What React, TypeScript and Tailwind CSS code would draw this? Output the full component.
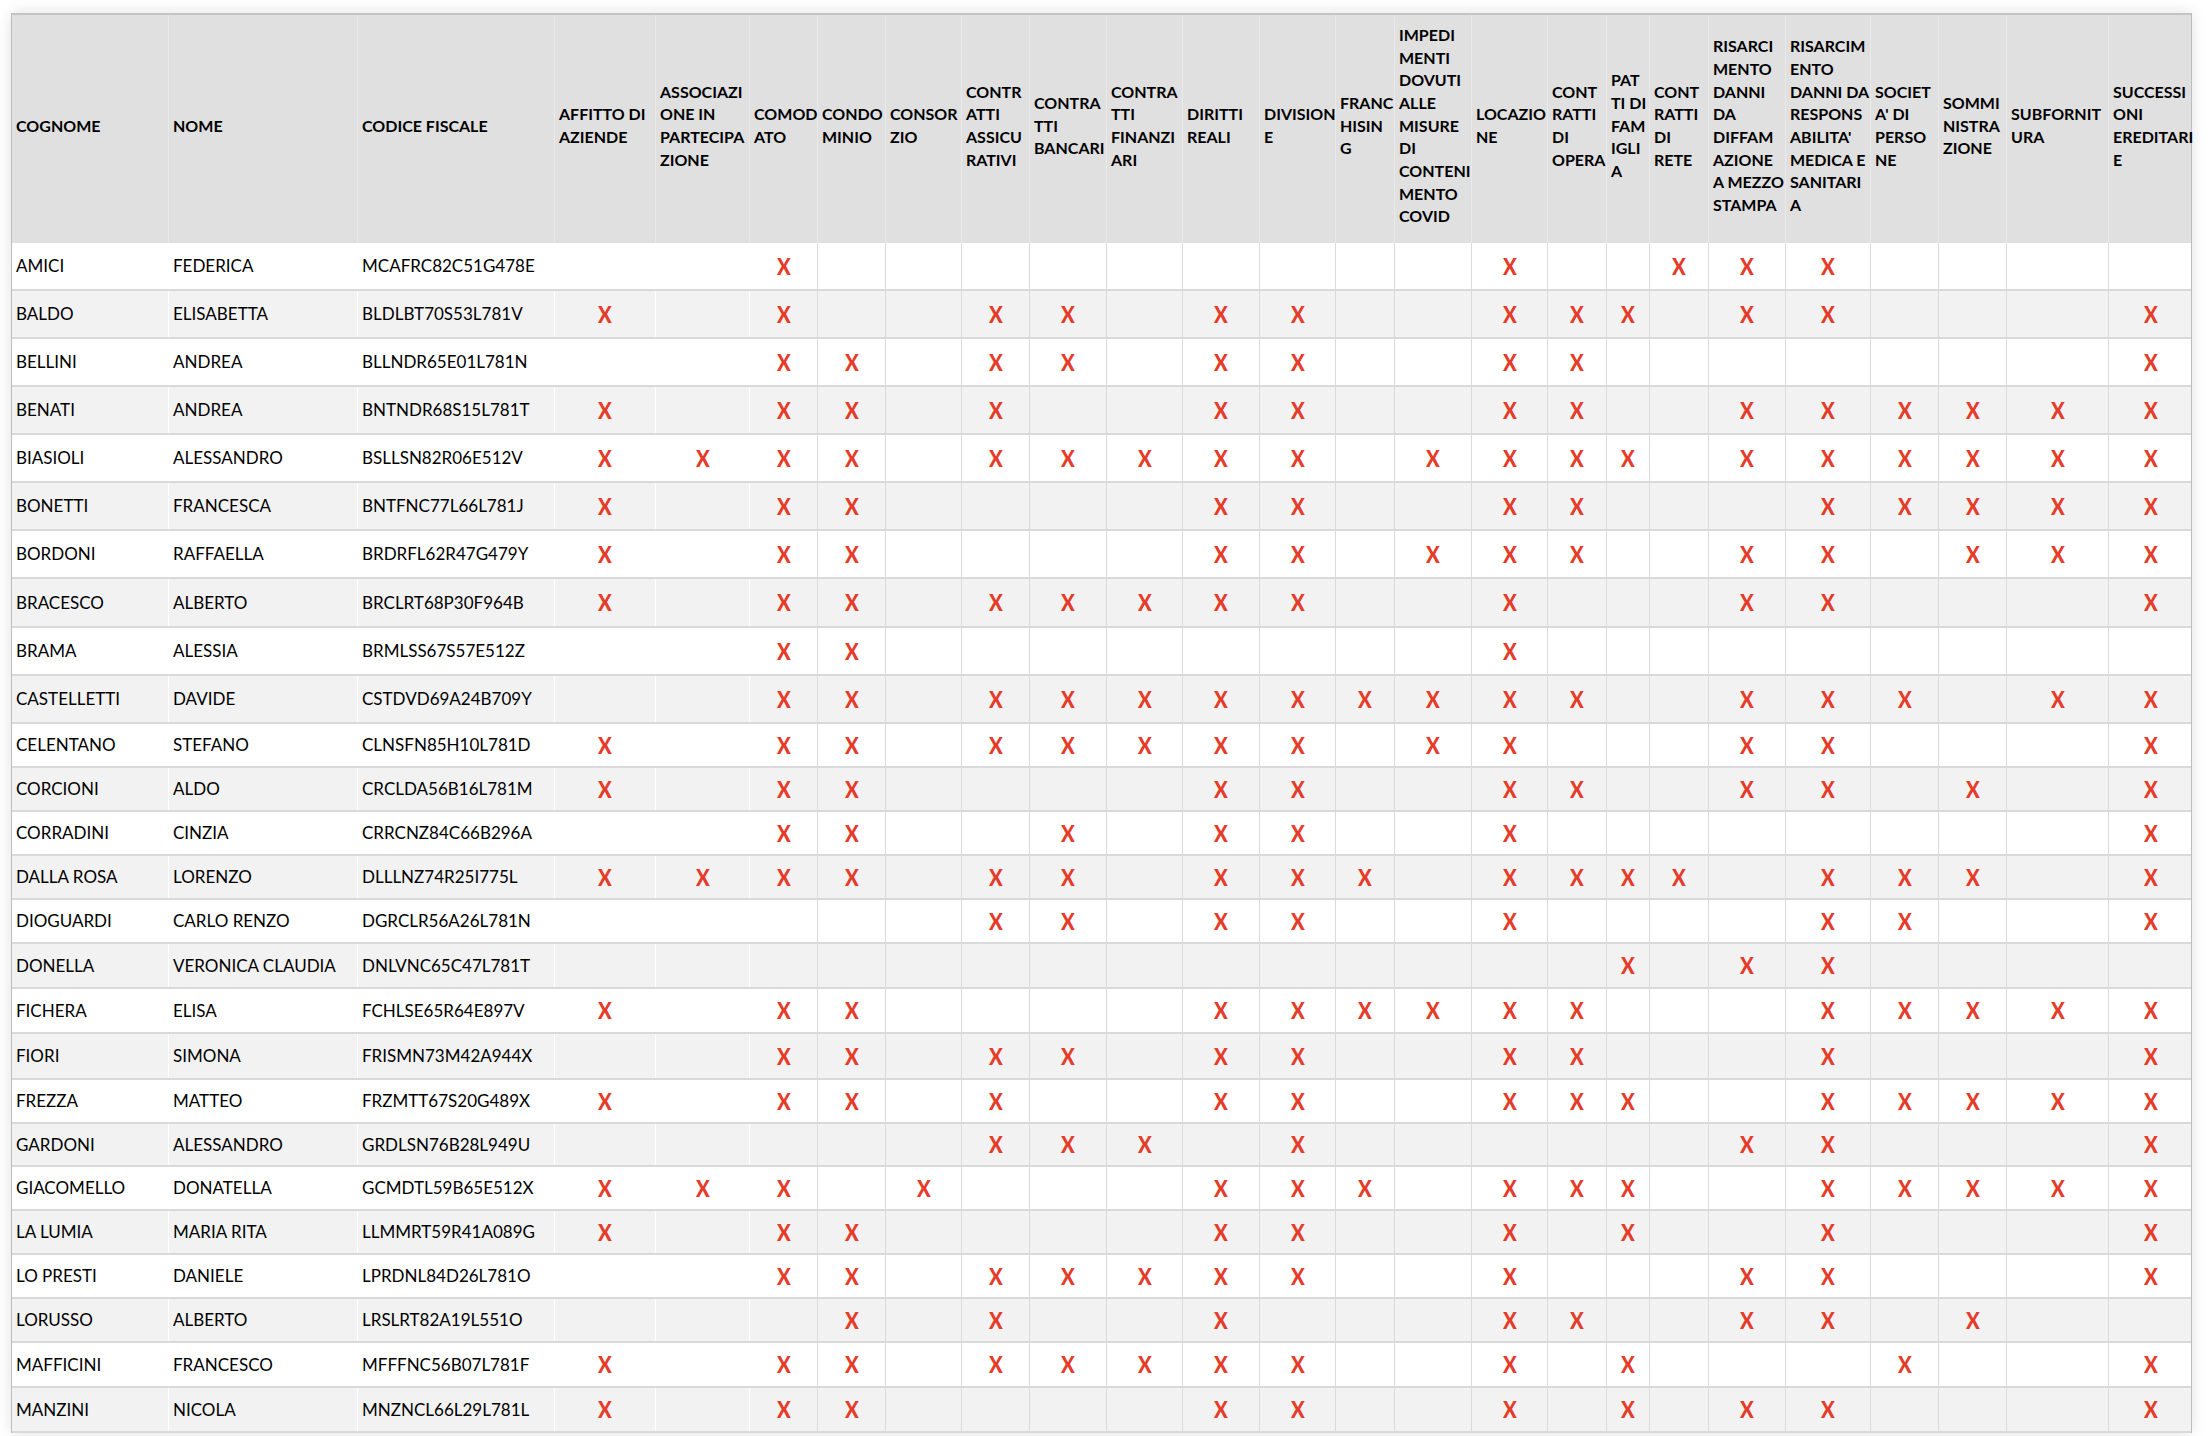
const COLS =
  "grid grid-cols-[157px_189px_197px_101px_94px_68px_68px_76px_68px_77px_76px_77px_76px_59px_77px_76px_59px_43px_59px_77px_85px_68px_68px_102px_84px]";

const headers: string[][] = [
  ["COGNOME"],
  ["NOME"],
  ["CODICE FISCALE"],
  ["AFFITTO DI", "AZIENDE"],
  ["ASSOCIAZI", "ONE IN", "PARTECIPA", "ZIONE"],
  ["COMOD", "ATO"],
  ["CONDO", "MINIO"],
  ["CONSOR", "ZIO"],
  ["CONTR", "ATTI", "ASSICU", "RATIVI"],
  ["CONTRA", "TTI", "BANCARI"],
  ["CONTRA", "TTI", "FINANZI", "ARI"],
  ["DIRITTI", "REALI"],
  ["DIVISION", "E"],
  ["FRANC", "HISIN", "G"],
  ["IMPEDI", "MENTI", "DOVUTI", "ALLE", "MISURE", "DI", "CONTENI", "MENTO", "COVID"],
  ["LOCAZIO", "NE"],
  ["CONT", "RATTI", "DI", "OPERA"],
  ["PAT", "TI DI", "FAM", "IGLI", "A"],
  ["CONT", "RATTI", "DI", "RETE"],
  ["RISARCI", "MENTO", "DANNI", "DA", "DIFFAM", "AZIONE", "A MEZZO", "STAMPA"],
  ["RISARCIM", "ENTO", "DANNI DA", "RESPONS", "ABILITA'", "MEDICA E", "SANITARI", "A"],
  ["SOCIET", "A' DI", "PERSO", "NE"],
  ["SOMMI", "NISTRA", "ZIONE"],
  ["SUBFORNIT", "URA"],
  ["SUCCESSI", "ONI", "EREDITARI", "E"],
];

// chiavi delle 22 colonne con le X, nello stesso ordine dell'intestazione
const keys = [
  "AFF", "ASS", "COM", "CND", "CNS", "ASC", "BAN", "FIN", "DIR", "DIV", "FRA",
  "IMP", "LOC", "OPE", "PAT", "RET", "DIF", "MED", "SOC", "SOM", "SUB", "SUC",
];

const rows: { cognome: string; nome: string; cf: string; marks: string; h: string }[] = [
  { cognome: "AMICI", nome: "FEDERICA", cf: "MCAFRC82C51G478E", marks: "COM LOC RET DIF MED", h: "h-[48px]" },
  { cognome: "BALDO", nome: "ELISABETTA", cf: "BLDLBT70S53L781V", marks: "AFF COM ASC BAN DIR DIV LOC OPE PAT DIF MED SUC", h: "h-[48px]" },
  { cognome: "BELLINI", nome: "ANDREA", cf: "BLLNDR65E01L781N", marks: "COM CND ASC BAN DIR DIV LOC OPE SUC", h: "h-[48px]" },
  { cognome: "BENATI", nome: "ANDREA", cf: "BNTNDR68S15L781T", marks: "AFF COM CND ASC DIR DIV LOC OPE DIF MED SOC SOM SUB SUC", h: "h-[48px]" },
  { cognome: "BIASIOLI", nome: "ALESSANDRO", cf: "BSLLSN82R06E512V", marks: "AFF ASS COM CND ASC BAN FIN DIR DIV IMP LOC OPE PAT DIF MED SOC SOM SUB SUC", h: "h-[48px]" },
  { cognome: "BONETTI", nome: "FRANCESCA", cf: "BNTFNC77L66L781J", marks: "AFF COM CND DIR DIV LOC OPE MED SOC SOM SUB SUC", h: "h-[48px]" },
  { cognome: "BORDONI", nome: "RAFFAELLA", cf: "BRDRFL62R47G479Y", marks: "AFF COM CND DIR DIV IMP LOC OPE DIF MED SOM SUB SUC", h: "h-[48px]" },
  { cognome: "BRACESCO", nome: "ALBERTO", cf: "BRCLRT68P30F964B", marks: "AFF COM CND ASC BAN FIN DIR DIV LOC DIF MED SUC", h: "h-[49px]" },
  { cognome: "BRAMA", nome: "ALESSIA", cf: "BRMLSS67S57E512Z", marks: "COM CND LOC", h: "h-[48px]" },
  { cognome: "CASTELLETTI", nome: "DAVIDE", cf: "CSTDVD69A24B709Y", marks: "COM CND ASC BAN FIN DIR DIV FRA IMP LOC OPE DIF MED SOC SUB SUC", h: "h-[48px]" },
  { cognome: "CELENTANO", nome: "STEFANO", cf: "CLNSFN85H10L781D", marks: "AFF COM CND ASC BAN FIN DIR DIV IMP LOC DIF MED SUC", h: "h-[44px]" },
  { cognome: "CORCIONI", nome: "ALDO", cf: "CRCLDA56B16L781M", marks: "AFF COM CND DIR DIV LOC OPE DIF MED SOM SUC", h: "h-[44px]" },
  { cognome: "CORRADINI", nome: "CINZIA", cf: "CRRCNZ84C66B296A", marks: "COM CND BAN DIR DIV LOC SUC", h: "h-[44px]" },
  { cognome: "DALLA ROSA", nome: "LORENZO", cf: "DLLLNZ74R25I775L", marks: "AFF ASS COM CND ASC BAN DIR DIV FRA LOC OPE PAT RET MED SOC SOM SUC", h: "h-[44px]" },
  { cognome: "DIOGUARDI", nome: "CARLO RENZO", cf: "DGRCLR56A26L781N", marks: "ASC BAN DIR DIV LOC MED SOC SUC", h: "h-[44px]" },
  { cognome: "DONELLA", nome: "VERONICA CLAUDIA", cf: "DNLVNC65C47L781T", marks: "PAT DIF MED", h: "h-[45px]" },
  { cognome: "FICHERA", nome: "ELISA", cf: "FCHLSE65R64E897V", marks: "AFF COM CND DIR DIV FRA IMP LOC OPE MED SOC SOM SUB SUC", h: "h-[45px]" },
  { cognome: "FIORI", nome: "SIMONA", cf: "FRISMN73M42A944X", marks: "COM CND ASC BAN DIR DIV LOC OPE MED SUC", h: "h-[46px]" },
  { cognome: "FREZZA", nome: "MATTEO", cf: "FRZMTT67S20G489X", marks: "AFF COM CND ASC DIR DIV LOC OPE PAT MED SOC SOM SUB SUC", h: "h-[44px]" },
  { cognome: "GARDONI", nome: "ALESSANDRO", cf: "GRDLSN76B28L949U", marks: "ASC BAN FIN DIV DIF MED SUC", h: "h-[43px]" },
  { cognome: "GIACOMELLO", nome: "DONATELLA", cf: "GCMDTL59B65E512X", marks: "AFF ASS COM CNS DIR DIV FRA LOC OPE PAT MED SOC SOM SUB SUC", h: "h-[44px]" },
  { cognome: "LA LUMIA", nome: "MARIA RITA", cf: "LLMMRT59R41A089G", marks: "AFF COM CND DIR DIV LOC PAT MED SUC", h: "h-[44px]" },
  { cognome: "LO PRESTI", nome: "DANIELE", cf: "LPRDNL84D26L781O", marks: "COM CND ASC BAN FIN DIR DIV LOC DIF MED SUC", h: "h-[44px]" },
  { cognome: "LORUSSO", nome: "ALBERTO", cf: "LRSLRT82A19L551O", marks: "CND ASC DIR LOC OPE DIF MED SOM", h: "h-[44px]" },
  { cognome: "MAFFICINI", nome: "FRANCESCO", cf: "MFFFNC56B07L781F", marks: "AFF COM CND ASC BAN FIN DIR DIV LOC PAT SOC SUC", h: "h-[45px]" },
  { cognome: "MANZINI", nome: "NICOLA", cf: "MNZNCL66L29L781L", marks: "AFF COM CND DIR DIV LOC PAT DIF MED SUC", h: "h-[45px]" },
];

const HeaderRow = () => (
  <div className={`${COLS} h-[230px] bg-[#e0e0e0] border-t-2 border-[#c4c4c4]`}>
    {headers.map((lines, i) => (
      <div
        key={i}
        className={`flex flex-col justify-center pl-[4px] pb-[6px] font-bold text-[16px] leading-[22.7px] text-black ${
          i < headers.length - 1 ? "border-r border-[#e9e9e9]" : ""
        }`}
      >
        {lines.map((l, j) => (
          <span key={j} className="whitespace-nowrap">
            {l}
          </span>
        ))}
      </div>
    ))}
  </div>
);

const DataRow = ({ row, index }: { row: (typeof rows)[number]; index: number }) => {
  const set = new Set(row.marks.split(" "));
  const bg = index % 2 === 0 ? "bg-white" : "bg-[#f2f2f2]";
  return (
    <div className={`${COLS} ${row.h} ${bg} border-b-2 border-[#d9d9d9]`}>
      <div className="flex items-center pl-[4px] border-r border-white whitespace-nowrap">{row.cognome}</div>
      <div className="flex items-center pl-[4px] border-r border-white whitespace-nowrap">{row.nome}</div>
      <div className="flex items-center pl-[4px] border-r border-white whitespace-nowrap">{row.cf}</div>
      {keys.map((k, i) => (
        <div
          key={k}
          className={`flex items-center justify-center ${
            i < 2 ? "border-r border-white" : i < keys.length - 1 ? "border-r border-[#dadada]" : ""
          }`}
        >
          {set.has(k) && (
            <span className="inline-block scale-x-[0.88] font-black text-[23px] leading-none text-[#e53c2a]">X</span>
          )}
        </div>
      ))}
    </div>
  );
};

export default function App() {
  return (
    <div className="min-h-[1436px] bg-white pl-[11px] pt-[13px] font-['Lato',_'Open_Sans',_sans-serif] text-[17px] text-black">
      <div className="w-[2181px] border-l border-r border-[#bdbdbd] shadow-[0_0_14px_rgba(0,0,0,0.12)]">
        <HeaderRow />
        {rows.map((r, i) => (
          <DataRow key={r.cf} row={r} index={i} />
        ))}
      </div>
    </div>
  );
}
